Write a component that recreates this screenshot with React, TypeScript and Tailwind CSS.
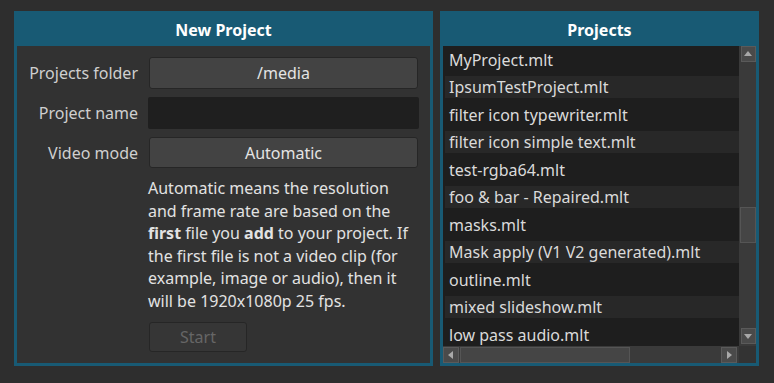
const projects = [
  'MyProject.mlt',
  'IpsumTestProject.mlt',
  'filter icon typewriter.mlt',
  'filter icon simple text.mlt',
  'test-rgba64.mlt',
  'foo & bar - Repaired.mlt',
  'masks.mlt',
  'Mask apply (V1 V2 generated).mlt',
  'outline.mlt',
  'mixed slideshow.mlt',
  'low pass audio.mlt',
]

function Arrow({ dir }: { dir: 'up' | 'down' | 'left' | 'right' }) {
  const points = {
    up: '1,7 5,2 9,7',
    down: '1,3 5,8 9,3',
    left: '7,1 2,5 7,9',
    right: '3,1 8,5 3,9',
  }[dir]
  return (
    <svg width="10" height="10" viewBox="0 0 10 10">
      <polygon points={points} fill="#a8a8a8" />
    </svg>
  )
}

function ScrollButton({ dir }: { dir: 'up' | 'down' | 'left' | 'right' }) {
  return (
    <div className="flex items-center justify-center w-[15px] h-[16px] bg-[#4a4a4a] border border-[#5a5a5a]">
      <Arrow dir={dir} />
    </div>
  )
}

function Panel({
  title,
  className,
  children,
}: {
  title: string
  className: string
  children: React.ReactNode
}) {
  return (
    <div className={`flex flex-col border-[3px] border-[#185a74] bg-[#323232] ${className}`}>
      <div className="h-[32px] shrink-0 bg-[#185a74] flex items-center justify-center font-bold text-white text-[16px]">
        {title}
      </div>
      {children}
    </div>
  )
}

function Field({ label, children }: { label: string; children: React.ReactNode }) {
  return (
    <div className="flex items-center">
      <div className="w-[121px] text-right text-[#cfcfcf]">{label}</div>
      <div className="ml-[11px] w-[269px]">{children}</div>
    </div>
  )
}

export default function App() {
  return (
    <div
      className="w-[774px] h-[383px] bg-[#2e2e2e] flex gap-[7px] pl-[14px] pt-[11px] text-[16px]"
      style={{ fontFamily: '"Noto Sans", sans-serif' }}
    >
      <Panel title="New Project" className="w-[419px] h-[355px]">
        <div className="flex flex-col gap-[8px] pt-[11px]">
          <Field label="Projects folder">
            <div className="h-[32px] flex items-center justify-center rounded-[3px] bg-[#434343] border border-[#262626] text-[#e4e4e4]">
              /media
            </div>
          </Field>
          <Field label="Project name">
            <div className="h-[32px] -mx-px rounded-[2px] bg-[#1f1f1f]" />
          </Field>
          <Field label="Video mode">
            <div className="h-[31px] flex items-center justify-center rounded-[3px] bg-[#434343] border border-[#262626] text-[#e4e4e4]">
              Automatic
            </div>
          </Field>
          <p className="ml-[131px] w-[268px] text-[#e2e2e2] leading-[22.6px] pt-px">
            Automatic means the resolution and frame rate are based on the{' '}
            <b>first</b> file you <b>add</b> to your project. If the first file is not
            a video clip (for example, image or audio), then it will be 1920x1080p 25
            fps.
          </p>
          <div className="ml-[132px] mt-[1px] w-[98px] h-[30px] flex items-center justify-center rounded-[3px] bg-[#363636] border border-[#262626] text-[#666666]">
            Start
          </div>
        </div>
      </Panel>

      <Panel title="Projects" className="w-[319px] h-[355px]">
        <div className="flex flex-1 min-h-0">
          <div className="flex-1 bg-[#1e1e1e] overflow-hidden">
            {projects.map((name, i) => (
              <div key={name} className="h-[27.5px] flex items-center">
                <div
                  className={`h-[22px] w-full ml-[2px] flex items-center pl-[4px] whitespace-nowrap text-[#dadada] ${
                    i % 2 === 1 ? 'bg-[#282828]' : ''
                  }`}
                >
                  {name}
                </div>
              </div>
            ))}
          </div>
          <div className="w-[17px] bg-[#3a3a3a] flex flex-col items-center py-0 pl-px">
            <ScrollButton dir="up" />
            <div className="flex-1 w-full relative">
              <div className="absolute left-0 w-[16px] top-[145px] h-[36px] bg-[#454545] border border-[#555555]" />
            </div>
            <div className="mb-[2px]">
              <ScrollButton dir="down" />
            </div>
          </div>
        </div>
        <div className="h-[17px] flex shrink-0">
          <div className="flex-1 bg-[#3a3a3a] flex items-center">
            <div className="h-[16px] w-[16px] flex items-center justify-center bg-[#4a4a4a] border border-[#5a5a5a]">
              <Arrow dir="left" />
            </div>
            <div className="h-[16px] w-[170px] ml-px bg-[#454545] border border-[#555555]" />
            <div className="flex-1" />
            <div className="h-[16px] w-[16px] mr-[2px] flex items-center justify-center bg-[#4a4a4a] border border-[#5a5a5a]">
              <Arrow dir="right" />
            </div>
          </div>
          <div className="w-[17px] bg-[#333333]" />
        </div>
      </Panel>
    </div>
  )
}
